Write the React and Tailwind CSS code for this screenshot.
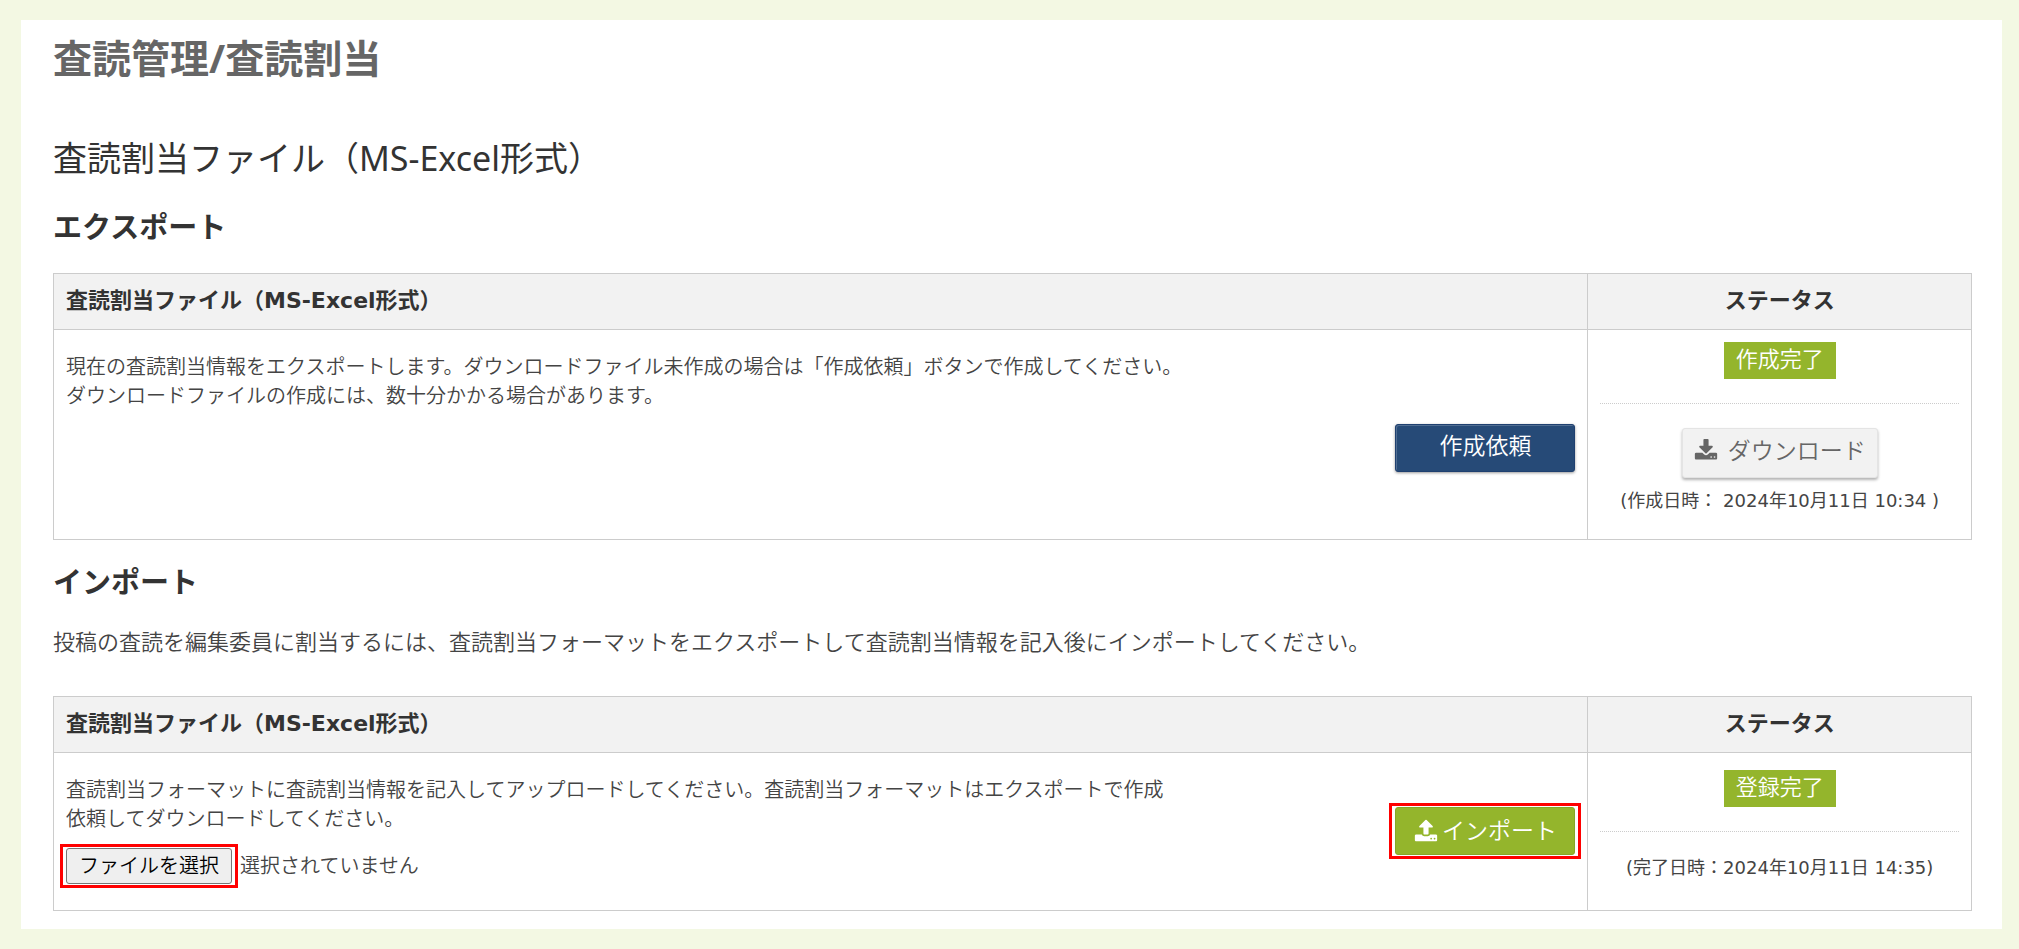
import { useRef } from "react";

const DOWNLOAD_PATH =
  "M1344 1344q0-26-19-45t-45-19-45 19-19 45 19 45 45 19 45-19 19-45zm256 0q0-26-19-45t-45-19-45 19-19 45 19 45 45 19 45-19 19-45zm128-224v320q0 40-28 68t-68 28h-1472q-40 0-68-28t-28-68v-320q0-40 28-68t68-28h465l135 136q58 56 136 56t136-56l136-136h464q40 0 68 28t28 68zm-325-569q17 41-14 70l-448 448q-18 19-45 19t-45-19l-448-448q-31-29-14-70 17-39 59-39h256v-448q0-26 19-45t45-19h256q26 0 45 19t19 45v448h256q42 0 59 39z";
const UPLOAD_PATH =
  "M1344 1472q0-26-19-45t-45-19-45 19-19 45 19 45 45 19 45-19 19-45zm256 0q0-26-19-45t-45-19-45 19-19 45 19 45 45 19 45-19 19-45zm128-224v320q0 40-28 68t-68 28h-1472q-40 0-68-28t-28-68v-320q0-40 28-68t68-28h427q21 56 70.5 92t110.5 36h256q61 0 110.5-36t70.5-92h427q40 0 68 28t28 68zm-325-648q-17 40-59 40h-256v448q0 26-19 45t-45 19h-256q-26 0-45-19t-19-45v-448h-256q-42 0-59-40-17-39 14-69l448-448q18-19 45-19t45 19l448 448q31 30 14 69z";

function Icon({ path }) {
  return (
    <svg viewBox="0 0 1792 1792" className="size-6 shrink-0 fill-current" aria-hidden="true">
      <path d={path} />
    </svg>
  );
}

function Highlight() {
  return <span className="pointer-events-none absolute -inset-x-1.5 -inset-y-1 border-3 border-[#ff0000]" />;
}

function Badge({ children }) {
  return (
    <span className="inline-block bg-[#94b52c] px-3 pt-[3px] pb-[5px] text-[22px] leading-[29px] text-white">
      {children}
    </span>
  );
}

function AssignmentTable({ children, status }) {
  return (
    <table className="w-full table-fixed border-collapse border border-[#cccccc]">
      <thead>
        <tr className="h-14 bg-[#f2f2f2] text-[22px] font-bold text-[#333333]">
          <th className="w-4/5 border border-[#cccccc] px-3 pb-0.5 text-left">査読割当ファイル（MS-Excel形式）</th>
          <th className="w-1/5 border border-[#cccccc] px-3 pb-0.5 text-center">ステータス</th>
        </tr>
      </thead>
      <tbody>
        <tr>
          <td className="border border-[#cccccc] px-3 align-top">{children}</td>
          <td className="border border-[#cccccc] px-3 text-center align-top">{status}</td>
        </tr>
      </tbody>
    </table>
  );
}

export default function App() {
  const fileInput = useRef(null);

  return (
    <div className="min-h-screen bg-[#f3f8e3] py-5 pr-[17px] pl-[21px] font-['DejaVu_Sans','Noto_Sans_CJK_JP',sans-serif] text-[20px] leading-[29px] font-[350] text-[#444444]">
      <main className="bg-white pr-[30px] pb-[18px] pl-8">
        <h1 className="pt-2.5 font-['Noto_Sans','Noto_Sans_CJK_JP',sans-serif] text-[39px] leading-14 font-bold text-[#666666]">
          査読管理/査読割当
        </h1>
        <h2 className="mt-[46px] font-['Noto_Sans','Noto_Sans_CJK_JP',sans-serif] text-[34px] leading-[52px] font-normal text-[#333333]">
          査読割当ファイル（MS-Excel形式）
        </h2>

        <section>
          <h3 className="mt-[22px] text-[29px] leading-11 font-bold text-[#333333]">エクスポート</h3>
          <div className="mt-[23px]">
            <AssignmentTable
              status={
                <div className="h-[209px] pt-3">
                  <Badge>作成完了</Badge>
                  <hr className="mt-6 border-t border-dotted border-[#cccccc]" />
                  <button
                    type="button"
                    className="mt-6 inline-flex h-[50px] items-center gap-2.5 rounded-[3px] border border-[#e4e4e4] bg-[#f2f2f2] px-[11px] pb-1 text-[23px] text-[#666666] shadow-[0_2px_3px_rgba(0,0,0,0.3)]"
                  >
                    <Icon path={DOWNLOAD_PATH} />
                    ダウンロード
                  </button>
                  <p className="mt-2 text-[18px] font-normal">(作成日時： 2024年10月11日 10:34 )</p>
                </div>
              }
            >
              <p className="pt-[23px]">
                現在の査読割当情報をエクスポートします。ダウンロードファイル未作成の場合は「作成依頼」ボタンで作成してください。
                <br />
                ダウンロードファイルの作成には、数十分かかる場合があります。
              </p>
              <div className="mt-[13px] flex justify-end">
                <button
                  type="button"
                  className="h-12 w-[180px] rounded-[3px] border border-[#1f4070] bg-[#264a77] pb-1 text-[23px] text-white shadow-[0_1px_3px_rgba(0,0,0,0.4),inset_1px_1px_0_rgba(255,255,255,0.2)]"
                >
                  作成依頼
                </button>
              </div>
            </AssignmentTable>
          </div>
        </section>

        <section>
          <h3 className="mt-[21px] text-[29px] leading-11 font-bold text-[#333333]">インポート</h3>
          <p className="mt-[22px] text-[22px] leading-8">
            投稿の査読を編集委員に割当するには、査読割当フォーマットをエクスポートして査読割当情報を記入後にインポートしてください。
          </p>
          <div className="mt-[37px]">
            <AssignmentTable
              status={
                <div className="h-[157px] pt-[17px]">
                  <Badge>登録完了</Badge>
                  <hr className="mt-6 border-t border-dotted border-[#cccccc]" />
                  <p className="mt-[21px] text-[18px] font-normal">(完了日時：2024年10月11日 14:35)</p>
                </div>
              }
            >
              <div className="flex items-start justify-between">
                <div className="pt-[23px]">
                  <p>
                    査読割当フォーマットに査読割当情報を記入してアップロードしてください。査読割当フォーマットはエクスポートで作成
                    <br />
                    依頼してダウンロードしてください。
                  </p>
                  <div className="mt-[14px] flex items-center gap-2">
                    <div className="relative">
                      <button
                        type="button"
                        onClick={() => fileInput.current.click()}
                        className="h-9 rounded-[3px] border border-[#767676] bg-[#efefef] px-3 text-black"
                      >
                        ファイルを選択
                      </button>
                      <Highlight />
                    </div>
                    <label htmlFor="assignment-file">選択されていません</label>
                    <input ref={fileInput} id="assignment-file" type="file" className="hidden" />
                  </div>
                </div>
                <div className="relative mt-[54px]">
                  <button
                    type="button"
                    className="flex h-12 w-[180px] items-center justify-center gap-1 rounded-[3px] border border-[#86a528] bg-[#94b52c] text-[23px] text-white"
                  >
                    <Icon path={UPLOAD_PATH} />
                    インポート
                  </button>
                  <Highlight />
                </div>
              </div>
            </AssignmentTable>
          </div>
        </section>
      </main>
    </div>
  );
}
